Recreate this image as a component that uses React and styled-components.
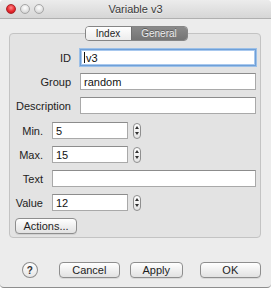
import React from 'react'
import styled, { createGlobalStyle } from 'styled-components'

const GlobalStyle = createGlobalStyle`
  html, body {
    margin: 0;
    padding: 0;
    background: #ffffff;
  }
  body {
    font-family: 'Liberation Sans', Arial, sans-serif;
    font-size: 11px;
    color: #1e1e1e;
  }
`

const Window = styled.div`
  width: 271px;
  height: 288px;
  box-sizing: border-box;
  display: flex;
  flex-direction: column;
  background: #ececec;
  border-bottom: 1px solid #8e8e8e;
  border-radius: 4px;
  overflow: hidden;
`

const TitleBar = styled.div`
  height: 18px;
  flex: none;
  display: flex;
  align-items: center;
  background: linear-gradient(#ececec, #d6d6d6);
  border-bottom: 1px solid #b0b0b0;
`

const Lights = styled.div`
  width: 46px;
  display: flex;
  align-items: center;
  gap: 4px;
  padding-left: 6px;
  box-sizing: border-box;
`

const Light = styled.span`
  width: 10px;
  height: 10px;
  border-radius: 50%;
  box-sizing: border-box;
  border: 1px solid ${p => (p.red ? '#a8262a' : '#a6a6a6')};
  background: ${p =>
    p.red
      ? 'radial-gradient(circle at 50% 35%, #ff8a8a 0%, #e8282e 55%, #b51218 100%)'
      : 'radial-gradient(circle at 50% 35%, #ffffff 0%, #e2e2e2 55%, #c4c4c4 100%)'};
`

const Title = styled.div`
  flex: 1;
  text-align: center;
  font-size: 11px;
  color: #3a3a3a;
  text-shadow: 0 1px 0 rgba(255, 255, 255, 0.6);
`

const Spacer = styled.div`
  width: 46px;
`

const Body = styled.div`
  display: flex;
  flex-direction: column;
  padding: 7px 10px 0 9px;
`

const Tabs = styled.div`
  align-self: center;
  display: flex;
  height: 15px;
  margin-left: 2px;
  position: relative;
  z-index: 1;
  border: 1px solid #858585;
  border-radius: 4px;
  overflow: hidden;
  box-sizing: border-box;
`

const Tab = styled.div`
  display: flex;
  align-items: center;
  justify-content: center;
  width: ${p => p.w}px;
  font-size: 10px;
  color: ${p => (p.active ? '#ececec' : '#1e1e1e')};
  background: ${p =>
    p.active ? 'linear-gradient(#8a8a8a, #747474)' : 'linear-gradient(#ffffff, #ececec)'};
  text-shadow: ${p => (p.active ? '0 -1px 0 rgba(0,0,0,0.35)' : 'none')};
  & + & {
    border-left: 1px solid #707070;
  }
`

const Group = styled.div`
  margin-top: -8px;
  height: 205px;
  box-sizing: border-box;
  border: 1px solid #c3c3c3;
  border-radius: 4px;
  background: #e3e3e3;
  padding: 15px 4px 0 5px;
  display: flex;
  flex-direction: column;
  gap: 7px;
`

const Form = styled.div`
  display: grid;
  grid-template-columns: ${p => p.label}px 1fr;
  column-gap: ${p => p.gap}px;
  row-gap: 7px;
  align-items: center;
  margin-top: ${p => p.top || 0}px;
`

const Label = styled.label`
  justify-self: end;
  white-space: nowrap;
  font-size: 11px;
  color: #222;
`

const Field = styled.div`
  height: 17px;
  box-sizing: border-box;
  background: #ffffff;
  border: 1px solid ${p => (p.focus ? '#6fa0d8' : '#a9a9a9')};
  border-top-color: ${p => (p.focus ? '#6fa0d8' : '#8c8c8c')};
  box-shadow: ${p => (p.focus ? '0 0 0 1px #9cc0e8, inset 0 0 0 1px #a8c8ee' : 'none')};
  padding: 0 3px;
  display: flex;
  align-items: center;
  font-size: 11px;
  color: #111;
  width: ${p => (p.w ? `${p.w}px` : 'auto')};
`

const Caret = styled.span`
  width: 1px;
  height: 11px;
  background: #111;
  margin-right: 1px;
`

const NumberRow = styled.div`
  display: flex;
  align-items: center;
  gap: 5px;
`

const Stepper = styled.div`
  width: 8px;
  height: 16px;
  box-sizing: border-box;
  border: 1px solid #8f8f8f;
  border-radius: 4px;
  background: linear-gradient(#ffffff, #e4e4e4);
  display: flex;
  flex-direction: column;
  align-items: center;
  justify-content: space-around;
  padding: 1px 0;
`

const Arrow = styled.span`
  width: 0;
  height: 0;
  border-left: 2px solid transparent;
  border-right: 2px solid transparent;
  ${p => (p.up ? 'border-bottom: 3px solid #333;' : 'border-top: 3px solid #333;')}
`

const Button = styled.button`
  height: 16px;
  width: ${p => p.w}px;
  margin-left: ${p => p.ml || 0}px;
  padding: 0;
  box-sizing: border-box;
  border: 1px solid #8e8e8e;
  border-radius: 4px;
  background: linear-gradient(#ffffff, #ededed 60%, #e2e2e2);
  box-shadow: 0 1px 0 rgba(0, 0, 0, 0.08);
  font-family: 'Liberation Sans', Arial, sans-serif;
  font-size: 11px;
  color: #1e1e1e;
  line-height: 14px;
`

const Footer = styled.div`
  display: flex;
  align-items: center;
  margin-top: 24px;
  padding-left: 13px;
`

const Help = styled.div`
  width: 16px;
  height: 16px;
  box-sizing: border-box;
  border-radius: 50%;
  border: 1px solid #8e8e8e;
  background: linear-gradient(#ffffff, #e6e6e6);
  display: flex;
  align-items: center;
  justify-content: center;
  font-size: 10px;
  font-weight: bold;
  color: #333;
  margin-right: 21px;
`

const NumberField = ({ value }) => (
  <NumberRow>
    <Field w={76}>{value}</Field>
    <Stepper>
      <Arrow up />
      <Arrow />
    </Stepper>
  </NumberRow>
)

export default function App() {
  return (
    <>
      <GlobalStyle />
      <Window>
        <TitleBar>
          <Lights>
            <Light red />
            <Light />
            <Light />
          </Lights>
          <Title>Variable v3</Title>
          <Spacer />
        </TitleBar>
        <Body>
          <Tabs>
            <Tab w={45}>Index</Tab>
            <Tab w={55} active>General</Tab>
          </Tabs>
          <Group>
            <Form label={56} gap={9}>
              <Label>ID</Label>
              <Field focus>
                <Caret />v3
              </Field>
              <Label>Group</Label>
              <Field>random</Field>
              <Label>Description</Label>
              <Field />
            </Form>
            <Form label={28} gap={9} top={1}>
              <Label>Min.</Label>
              <NumberField value="5" />
              <Label>Max.</Label>
              <NumberField value="15" />
              <Label>Text</Label>
              <Field />
              <Label>Value</Label>
              <NumberField value="12" />
            </Form>
            <div>
              <Button w={62}>Actions...</Button>
            </div>
          </Group>
          <Footer>
            <Help>?</Help>
            <Button w={63}>Cancel</Button>
            <Button w={54} ml={10}>Apply</Button>
            <Button w={63} ml={17}>OK</Button>
          </Footer>
        </Body>
      </Window>
    </>
  )
}
